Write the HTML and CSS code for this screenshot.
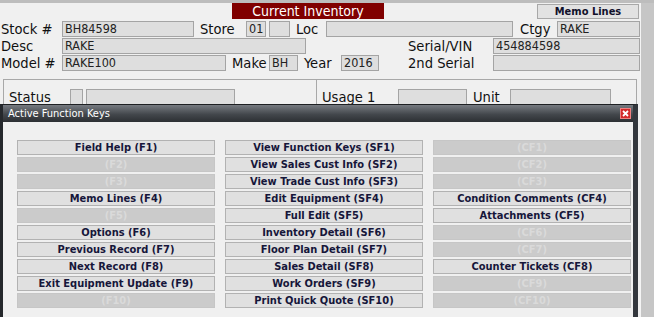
FILE: index.html
```html
<!DOCTYPE html>
<html>
<head>
<meta charset="utf-8">
<link rel="stylesheet" href="styles.css">
</head>
<body>
<div class="screen">
  <div class="main">
    <div class="topbar">
      <div class="title">Current Inventory</div>
      <div class="memo">Memo Lines</div>
    </div>
    <div class="row">
      <span class="lbl w62">Stock #</span><span class="inp" style="width:132px">BH84598</span>
      <span class="lbl" style="width:46px;padding-left:6px">Store</span><span class="inp" style="width:20px">01</span><span class="inp" style="width:21px;margin-left:3px"></span>
      <span class="lbl" style="width:30px;padding-left:6px">Loc</span><span class="inp" style="width:187px"></span>
      <span class="lbl" style="width:37px;padding-left:7px">Ctgy</span><span class="inp grow">RAKE</span>
    </div>
    <div class="row">
      <span class="lbl w62">Desc</span><span class="inp" style="width:244px">RAKE</span>
      <span class="lbl" style="width:85px;padding-left:102px">Serial/VIN</span><span class="inp grow">454884598</span>
    </div>
    <div class="row">
      <span class="lbl w62">Model #</span><span class="inp" style="width:164px">RAKE100</span>
      <span class="lbl" style="width:37px;padding-left:6px">Make</span><span class="inp" style="width:29px">BH</span>
      <span class="lbl" style="width:37px;padding-left:6px">Year</span><span class="inp" style="width:38px">2016</span>
      <span class="lbl" style="width:85px;padding-left:29px">2nd Serial</span><span class="inp grow"></span>
    </div>
    <div class="panel">
      <div class="pleft">
        <span class="lbl" style="width:61px;padding-left:5px">Status</span><span class="inp" style="width:13px"></span><span class="inp" style="width:149px;margin-left:3px"></span>
      </div>
      <div class="pright">
        <span class="lbl" style="width:76px;padding-left:5px">Usage 1</span><span class="inp" style="width:69px"></span>
        <span class="lbl" style="width:37px;padding-left:6px">Unit</span><span class="inp" style="width:101px"></span>
      </div>
    </div>
  </div>
  <div class="strip"></div>

  <div class="dialog">
    <div class="dtitle">
      <span>Active Function Keys</span>
      <span class="close"><svg width="11" height="11" viewBox="0 0 11 11"><rect x="0" y="0" width="11" height="11" fill="#d42a2a"/><rect x="0.5" y="0.5" width="10" height="10" fill="none" stroke="#f08080"/><path d="M3 3 L8 8 M8 3 L3 8" stroke="#fff" stroke-width="1.8"/></svg></span>
    </div>
    <div class="dbody">
      <div class="keys">
        <div class="key">Field Help (F1)</div>
        <div class="key">View Function Keys (SF1)</div>
        <div class="key off">(CF1)</div>
        <div class="key off">(F2)</div>
        <div class="key">View Sales Cust Info (SF2)</div>
        <div class="key off">(CF2)</div>
        <div class="key off">(F3)</div>
        <div class="key">View Trade Cust Info (SF3)</div>
        <div class="key off">(CF3)</div>
        <div class="key">Memo Lines (F4)</div>
        <div class="key">Edit Equipment (SF4)</div>
        <div class="key">Condition Comments (CF4)</div>
        <div class="key off">(F5)</div>
        <div class="key">Full Edit (SF5)</div>
        <div class="key">Attachments (CF5)</div>
        <div class="key">Options (F6)</div>
        <div class="key">Inventory Detail (SF6)</div>
        <div class="key off">(CF6)</div>
        <div class="key">Previous Record (F7)</div>
        <div class="key">Floor Plan Detail (SF7)</div>
        <div class="key off">(CF7)</div>
        <div class="key">Next Record (F8)</div>
        <div class="key">Sales Detail (SF8)</div>
        <div class="key">Counter Tickets (CF8)</div>
        <div class="key">Exit Equipment Update (F9)</div>
        <div class="key">Work Orders (SF9)</div>
        <div class="key off">(CF9)</div>
        <div class="key off">(F10)</div>
        <div class="key">Print Quick Quote (SF10)</div>
        <div class="key off">(CF10)</div>
      </div>
    </div>
  </div>
</div>
</body>
</html>
```

FILE: styles.css
```css
html, body {
  margin: 0;
  padding: 0;
}
body {
  width: 654px;
  height: 317px;
  overflow: hidden;
  background: #f0f0f0;
  font-family: "DejaVu Sans Condensed", "DejaVu Sans", sans-serif;
}
.screen {
  position: relative;
  display: flex;
  width: 654px;
  height: 317px;
  overflow: hidden;
  border-top: 3px solid #bdbdbd;
  box-sizing: border-box;
}
.main {
  width: 640px;
  flex: none;
  overflow: hidden;
}
.strip {
  flex: 1;
  background: #c6c6c6;
  border-left: 1px solid #f4f4f4;
}
.topbar {
  position: relative;
  height: 18px;
}
.title {
  position: absolute;
  left: 232px;
  top: 0;
  width: 152px;
  height: 16px;
  background: #800000;
  color: #fff;
  font-size: 14px;
  line-height: 16px;
  text-align: center;
}
.memo {
  position: absolute;
  left: 537px;
  top: 1px;
  width: 100px;
  height: 13px;
  border: 1px solid #a8a8a8;
  background: #e2e2e2;
  font-size: 11px;
  font-weight: bold;
  line-height: 13px;
  text-align: center;
  color: #10102a;
}
.row {
  display: flex;
  height: 17px;
  align-items: flex-start;
}
.lbl {
  flex: none;
  font-size: 14.6px;
  line-height: 16px;
  color: #111;
  white-space: nowrap;
}
.w62 { width: 61px; padding-left: 1px; }
.inp {
  flex: none;
  box-sizing: border-box;
  height: 16px;
  border: 1px solid #a4a4a4;
  background: #dedede;
  font-size: 12.5px;
  line-height: 14px;
  padding-left: 2px;
  color: #222;
  white-space: nowrap;
  overflow: hidden;
}
.grow { flex: 1; }
.panel {
  margin: 7px 0 0 3px;
  width: 634px;
  height: 60px;
  box-sizing: border-box;
  border: 1px solid #a8a8a8;
  display: flex;
  padding-top: 9px;
}
.pleft {
  width: 312px;
  border-right: 1px solid #a8a8a8;
  display: flex;
  align-items: flex-start;
  height: 40px;
  margin-top: -9px;
  padding-top: 9px;
}
.pright {
  display: flex;
  align-items: flex-start;
}
.dialog {
  position: absolute;
  left: 0;
  top: 101px;
  width: 638px;
  height: 230px;
  box-sizing: border-box;
  background: #2f3338;
  border-top: 1px solid #1e2023;
  border-left: 3px solid #25282c;
  border-right: 5px solid #33373d;
}
.dtitle {
  height: 17px;
  background: linear-gradient(#777b81, #43474c 55%, #2c2f33);
  color: #fff;
  font-size: 11px;
  line-height: 17px;
  padding-left: 5px;
  display: flex;
  justify-content: space-between;
  align-items: center;
}
.close {
  display: flex;
  margin-right: 2px;
}
.dbody {
  background: #f0f0f0;
  height: 210px;
  padding: 18px 0 0 14px;
  box-sizing: border-box;
}
.keys {
  display: grid;
  grid-template-columns: 198px 198px 198px;
  column-gap: 10px;
  row-gap: 2px;
}
.key {
  box-sizing: border-box;
  height: 15px;
  border: 1px solid #b2b2b2;
  background: #e0e0e0;
  font-size: 11px;
  font-weight: bold;
  line-height: 13px;
  text-align: center;
  color: #16163a;
  white-space: nowrap;
}
.key.off {
  background: #cbcbcb;
  border-color: #c6c6c6;
  color: #dadada;
}
```
